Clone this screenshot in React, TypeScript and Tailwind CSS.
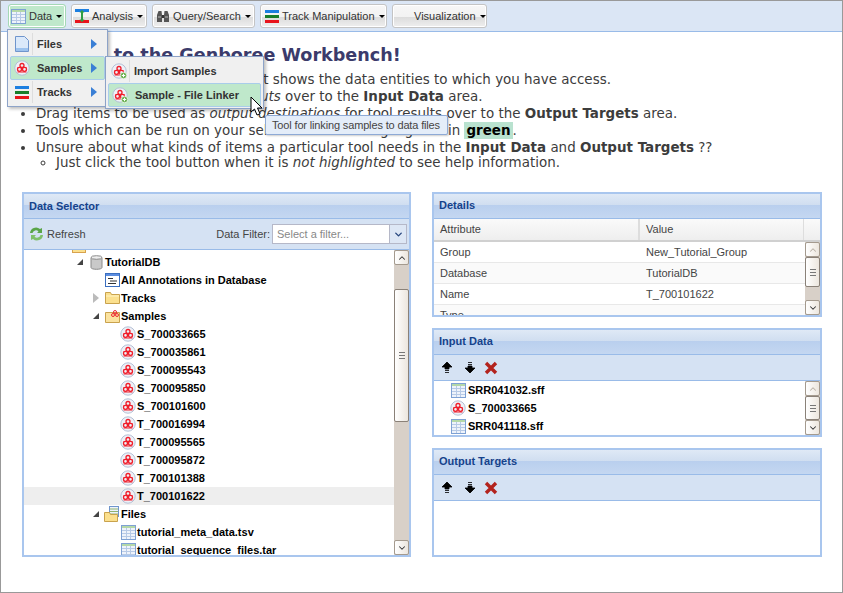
import { ChevronDown, ChevronUp } from "lucide-react";
import React from "react";

const treeRows: { label: string; level: number; arrow?: "open" | "closed"; icon: string }[] = [
  { label: "TutorialDB", level: 0, arrow: "open", icon: "db" },
  { label: "All Annotations in Database", level: 1, icon: "annot" },
  { label: "Tracks", level: 1, arrow: "closed", icon: "folder" },
  { label: "Samples", level: 1, arrow: "open", icon: "samplefolder" },
  { label: "S_700033665", level: 2, icon: "sample" },
  { label: "S_700035861", level: 2, icon: "sample" },
  { label: "S_700095543", level: 2, icon: "sample" },
  { label: "S_700095850", level: 2, icon: "sample" },
  { label: "S_700101600", level: 2, icon: "sample" },
  { label: "T_700016994", level: 2, icon: "sample" },
  { label: "T_700095565", level: 2, icon: "sample" },
  { label: "T_700095872", level: 2, icon: "sample" },
  { label: "T_700101388", level: 2, icon: "sample" },
  { label: "T_700101622", level: 2, icon: "sample" },
  { label: "Files", level: 1, arrow: "open", icon: "filefolder" },
  { label: "tutorial_meta_data.tsv", level: 2, icon: "table" },
  { label: "tutorial_sequence_files.tar", level: 2, icon: "table" },
];

function TableIcon() {
  return (
    <svg width="15" height="15" viewBox="0 0 15 15" className="shrink-0">
      <rect x="0.5" y="0.5" width="14" height="14" fill="#eef3fb" stroke="#7ea1d4" />
      <rect x="1" y="1" width="13" height="2" fill="#b4d8a8" />
      <path d="M1 5.500h13M1 8.500h13M1 11.500h13M5.500 3v11M9.500 3v11" stroke="#b7cae6" />
    </svg>
  );
}

function SampleIcon({ plus }: { plus?: boolean }) {
  return (
    <svg width="16" height="16" viewBox="0 0 16 16" className="shrink-0">
      <circle cx="8" cy="8" r="7.200" fill="#eef0f6" stroke="#b4c0d6" />
      <circle cx="8" cy="5.500" r="2" fill="none" stroke="#f01d2a" strokeWidth="1.300" />
      <circle cx="5.500" cy="9.300" r="2" fill="none" stroke="#f01d2a" strokeWidth="1.300" />
      <circle cx="10.500" cy="9.300" r="2" fill="none" stroke="#f01d2a" strokeWidth="1.300" />
      <path d="M3.500 12h9M3.500 7.500h9M8 7v2" stroke="#f01d2a" />
      {plus && (
        <>
          <circle cx="12.500" cy="12.500" r="3.300" fill="#6cb254" stroke="#fff" strokeWidth="0.700" />
          <path d="M10.800 12.500h3.400M12.500 10.800v3.400" stroke="#fff" />
        </>
      )}
    </svg>
  );
}

function FolderIcon() {
  return (
    <svg width="15" height="14" viewBox="0 0 15 14" className="shrink-0">
      <path d="M0.500 12.500V1.500h5l1 2h8v9z" fill="#fbe08e" stroke="#c9a24d" />
      <path d="M1 5h13" stroke="#fff3c4" />
    </svg>
  );
}

function TreeIcon({ name }: { name: string }) {
  if (name === "sample") return <SampleIcon />;
  if (name === "table") return <TableIcon />;
  if (name === "folder") return <FolderIcon />;
  if (name === "db")
    return (
      <svg width="13" height="15" viewBox="0 0 13 15" className="shrink-0">
        <path d="M1 2.500v10c0 2.400 11 2.400 11 0v-10z" fill="#c9c9c9" stroke="#8a8a8a" />
        <ellipse cx="6.500" cy="2.500" rx="5.500" ry="1.800" fill="#eeeeee" stroke="#8a8a8a" />
      </svg>
    );
  if (name === "annot")
    return (
      <svg width="15" height="14" viewBox="0 0 15 14" className="shrink-0">
        <rect x="0.500" y="0.500" width="14" height="13" fill="#fff" stroke="#3b6fc0" />
        <rect x="1" y="1" width="13" height="2" fill="#5b8de0" />
        <path d="M3 5.500h5M5 8h7M3 10.500h8" stroke="#333" />
      </svg>
    );
  if (name === "samplefolder")
    return (
      <svg width="15" height="15" viewBox="0 0 15 15" className="shrink-0">
        <path d="M0.500 13.500V3.500h14v10z" fill="#fbe3a0" stroke="#c9a24d" />
        <circle cx="10" cy="3" r="1.500" fill="none" stroke="#ee2a35" />
        <circle cx="8" cy="6" r="1.500" fill="none" stroke="#ee2a35" />
        <circle cx="12" cy="6" r="1.500" fill="none" stroke="#ee2a35" />
      </svg>
    );
  return (
    <svg width="16" height="16" viewBox="0 0 16 16" className="shrink-0">
      <rect x="5.500" y="0.500" width="9" height="10" fill="#eef3fb" stroke="#6f95cc" />
      <path d="M6 3h8M6 5.500h8M6 8h8" stroke="#8fb36f" />
      <path d="M0.500 15.500V6.500h5l1 2h7v7z" fill="#fbe08e" stroke="#c9a24d" />
    </svg>
  );
}

function TracksIcon() {
  return (
    <svg width="14" height="13" viewBox="0 0 14 13" className="shrink-0">
      <rect width="14" height="3" fill="#1d7fe0" />
      <rect y="5" width="14" height="3" fill="#1a7d2b" />
      <rect y="10" width="14" height="3" fill="#e8141c" />
    </svg>
  );
}

function Arrow({ up }: { up: boolean }) {
  return (
    <svg width="12" height="13" viewBox="0 0 12 13" className="shrink-0">
      {up ? (
        <path d="M6 1l5 5H8v2H4V6H1zM4 9.500h4M4 11.500h4" fill="#000" stroke="#000" strokeWidth="0.800" />
      ) : (
        <path d="M6 12L1 7h3V5h4v2h3zM4 3.500h4M4 1.500h4" fill="#000" stroke="#000" strokeWidth="0.800" />
      )}
    </svg>
  );
}

function RemoveIcon() {
  return (
    <svg width="14" height="14" viewBox="0 0 14 14" className="shrink-0 -ml-[3px]">
      <path d="M2 2l10 10M12 2L2 12" stroke="#b3231d" strokeWidth="3.400" />
    </svg>
  );
}

function PanelHeader({ title, className }: { title: string; className?: string }) {
  return (
    <div className={`h-[25px] shrink-0 border-b border-[#99bbe8] bg-[linear-gradient(#dfe9f6_0,#d0def0_45%,#b9cfee_46%,#c4d7f1_100%)] pl-[5px] text-[11px] leading-[14px] font-bold text-[#15428b] ${className ?? "pt-[4px]"}`}>
      {title}
    </div>
  );
}

function MoveToolbar() {
  return (
    <div className="h-[26px] shrink-0 flex items-center gap-[11px] pl-[7px] border-b border-[#99bbe8] bg-[#d5e2f3]">
      <Arrow up />
      <Arrow up={false} />
      <RemoveIcon />
    </div>
  );
}

function Scrollbar({ thumbTop, thumbHeight, disabledUp }: { thumbTop: number; thumbHeight: number; disabledUp?: boolean }) {
  return (
    <div className="w-[15px] shrink-0 flex flex-col bg-[#d8d0c8]">
      <div className="h-[15px] shrink-0 flex items-center justify-center border border-[#a49a8e] rounded-[2px] bg-[linear-gradient(90deg,#fff,#ece6de)]">
        <ChevronUp size={10} strokeWidth={2.500} className={disabledUp ? "text-[#b8b0a6]" : "text-[#333]"} />
      </div>
      <div className="flex-1 relative">
        <div
          className="absolute left-0 right-0 flex items-center justify-center border border-[#8a8178] rounded-[2px] bg-[linear-gradient(90deg,#fff,#ece6de)]"
          style={{ top: thumbTop, height: thumbHeight }}
        >
          <div className="w-[6px] h-[7px] border-y border-[#777] flex items-center">
            <div className="w-full h-px bg-[#777]" />
          </div>
        </div>
      </div>
      <div className="h-[15px] shrink-0 flex items-center justify-center border border-[#a49a8e] rounded-[2px] bg-[linear-gradient(90deg,#fff,#ece6de)]">
        <ChevronDown size={10} strokeWidth={2.500} className="text-[#333]" />
      </div>
    </div>
  );
}

function ToolButton({ icon, label, active, className }: { icon: React.ReactNode; label: string; active?: boolean; className?: string }) {
  return (
    <div
      className={`h-[24px] shrink-0 flex items-center gap-[3px] rounded-[3px] border pl-[2px] text-[11px] text-[#333] shadow-[inset_0_0_0_1px_#fff] ${
        active
          ? "border-[#a5d8b5] bg-[#bfe8cb]"
          : "border-[#c4c4c4] bg-[linear-gradient(#f7f7f7_0,#f2f2f2_55%,#dcdcdc_56%,#efefef_100%)]"
      } ${className ?? ""}`}
    >
      <span className="w-[15px] shrink-0 flex justify-center">{icon}</span>
      <span>{label}</span>
      <span className="ml-[1px] w-0 h-0 border-x-[3px] border-x-transparent border-t-[3px] border-t-black" />
    </div>
  );
}

function MenuArrow() {
  return <span className="ml-auto w-0 h-0 border-y-[5px] border-y-transparent border-l-[6px] border-l-[#3a7fd5]" />;
}

export default function App() {
  return (
    <div className="relative w-[843px] h-[593px] overflow-hidden border border-[#999] bg-white font-['Liberation_Sans',sans-serif]">
      {/* top toolbar */}
      <div className="h-[31px] flex items-center gap-[5px] pl-[7px] border-b border-[#99bbe8] bg-[#dbe6f5]">
        <ToolButton active icon={<TableIcon />} label="Data" className="w-[58px]" />
        <ToolButton
          className="w-[76px]"
          icon={
            <svg width="14" height="14" viewBox="0 0 14 14" className="shrink-0">
              <rect width="14" height="3" fill="#1d7fe0" />
              <rect y="11" width="14" height="3" fill="#e8141c" />
              <path d="M7 1l2.500 2.500H8v7h1.500L7 13l-2.500-2.500H6v-7H4.500z" fill="#2f9e44" />
            </svg>
          }
          label="Analysis"
        />
        <ToolButton
          className="w-[103px]"
          icon={
            <svg width="14" height="13" viewBox="0 0 14 13" className="shrink-0">
              <path d="M1 12V5l1.500-4h3L6 5v7zM8 12V5l.5-4h3L13 5v7z" fill="#555" />
              <path d="M6 5h2v3H6z" fill="#333" />
              <path d="M2 7h3M9 7h3" stroke="#bbb" />
            </svg>
          }
          label="Query/Search"
        />
        <ToolButton icon={<TracksIcon />} label="Track Manipulation" className="w-[127px] pl-[3px]" />
        <ToolButton icon={<span />} label="Visualization" className="w-[95px] pl-[3px]" />
      </div>

      {/* intro text */}
      <div className="h-[160px] font-['DejaVu_Sans',sans-serif] text-[13.450px] leading-[17px] text-[#3c3c3c]">
        <h1 className="pl-[17px] pt-[12px] text-[17.600px] leading-[22px] font-bold text-[#3b3b6b]">
          Welcome to the Genboree Workbench!
        </h1>
        <ul className="list-disc pl-[35px] mt-[5px]">
          <li>The Data Selector panel at the left shows the data entities to which you have access.</li>
          <li>
            Drag items to be used as tool <i>inputs</i> over to the <b>Input Data</b> area.
          </li>
          <li>
            Drag items to be used as <i>output destinations</i> for tool results over to the <b>Output Targets</b> area.
          </li>
          <li>
            Tools which can be run on your selections will be highlighted in{" "}
            <b className="bg-[#b9e2cf] px-[2px] py-[1px] text-black">green</b>.
          </li>
          <li>
            Unsure about what kinds of items a particular tool needs in the <b>Input Data</b> and{" "}
            <b>Output Targets</b> ??
            <ul className="list-[circle] pl-[20px] -mt-[1px] leading-[15px]">
              <li>
                Just click the tool button when it is <i>not highlighted</i> to see help information.
              </li>
            </ul>
          </li>
        </ul>
      </div>

      {/* panels */}
      <div className="flex gap-[21px] pl-[21px]">
        <div className="w-[389px] h-[365px] flex flex-col border-2 border-[#a9c6ee]">
          <PanelHeader title="Data Selector" className="pt-[5px]" />
          <div className="h-[31px] shrink-0 flex items-center pl-[4px] pr-[2px] text-[11px] text-[#444] border-b border-[#99bbe8] bg-[#d5e2f3]">
            <svg width="17" height="16" viewBox="0 0 17 16" className="shrink-0 mr-[2px]">
              <path d="M2 7a6 6 0 0 1 10-4l2-1v5h-5l1.500-1.500A3.500 3.500 0 0 0 4.500 7z" fill="#5aa548" />
              <path d="M15 9a6 6 0 0 1-10 4l-2 1V9h5l-1.500 1.500A3.500 3.500 0 0 0 12.500 9z" fill="#7fc06a" />
            </svg>
            <span>Refresh</span>
            <span className="ml-auto mr-[2px]">Data Filter:</span>
            <div className="w-[135px] h-[20px] flex items-center border border-[#b5b8c8] bg-white">
              <span className="flex-1 pl-[4px] text-[#888]">Select a filter...</span>
              <span className="w-[17px] h-full flex items-center justify-center border-l border-[#b5b8c8] bg-[#dde7f5]">
                <ChevronDown size={11} strokeWidth={3} className="text-[#26467e]" />
              </span>
            </div>
          </div>
          <div className="flex-1 min-h-0 flex">
            <div className="flex-1 min-w-0 overflow-hidden">
              {/* bottom edge of the parent folder, scrolled out of view */}
              <div className="h-[3px] w-[14px] ml-[48px] border-x border-b border-[#d8a24d] bg-[#fbe08e]" />
              {treeRows.map((row) => (
                <div
                  key={row.label}
                  className={`h-[18px] flex items-center text-[11px] font-bold text-black ${
                    row.label === "T_700101622" ? "bg-[#eeeeee]" : ""
                  }`}
                  style={{ paddingLeft: 48 + row.level * 16 }}
                >
                  <span className="w-[16px] shrink-0 flex justify-center">
                    {row.arrow === "open" && (
                      <span className="w-0 h-0 border-b-[6px] border-b-[#444] border-l-[6px] border-l-transparent" />
                    )}
                    {row.arrow === "closed" && (
                      <span className="w-0 h-0 border-y-[5px] border-y-transparent border-l-[6px] border-l-[#bbb]" />
                    )}
                  </span>
                  <span className="w-[16px] shrink-0 flex justify-center">
                    <TreeIcon name={row.icon} />
                  </span>
                  <span className="ml-[1px] whitespace-nowrap">{row.label}</span>
                </div>
              ))}
            </div>
            <Scrollbar thumbTop={24} thumbHeight={133} />
          </div>
        </div>

        <div className="w-[390px] flex flex-col gap-[11px]">
          <div className="h-[125px] flex flex-col border-2 border-[#a9c6ee]">
            <PanelHeader title="Details" />
            <div className="h-[23px] shrink-0 flex items-center text-[11px] text-[#444] border-b-2 border-[#d0d0d0] bg-[linear-gradient(#fafafa,#eeeeee)]">
              <div className="w-[206px] pl-[6px] h-full flex items-center border-r-2 border-[#dddddd]">Attribute</div>
              <div className="w-[164px] pl-[6px] h-full flex items-center border-r border-[#dddddd]">Value</div>
            </div>
            <div className="flex-1 min-h-0 flex">
              <div className="flex-1 min-w-0 overflow-hidden text-[11px] text-[#444]">
                {[
                  ["Group", "New_Tutorial_Group"],
                  ["Database", "TutorialDB"],
                  ["Name", "T_700101622"],
                  ["Type", ""],
                ].map(([attr, val], i) => (
                  <div key={attr} className={`h-[21px] shrink-0 flex items-center border-b border-[#e8e8e8] ${i % 2 ? "bg-[#fafafa]" : "bg-white"}`}>
                    <div className="w-[206px] pl-[6px]">{attr}</div>
                    <div className="pl-[6px]">{val}</div>
                  </div>
                ))}
              </div>
              <Scrollbar thumbTop={0} thumbHeight={30} disabledUp />
            </div>
          </div>

          <div className="h-[109px] flex flex-col border-2 border-[#a9c6ee]">
            <PanelHeader title="Input Data" />
            <MoveToolbar />
            <div className="flex-1 min-h-0 flex">
              <div className="flex-1 min-w-0 overflow-hidden pl-[16px] text-[11px] font-bold text-black">
                {[
                  { label: "SRR041032.sff", sample: false },
                  { label: "S_700033665", sample: true },
                  { label: "SRR041118.sff", sample: false },
                ].map((item) => (
                  <div key={item.label} className="h-[18px] flex items-center gap-[2px]">
                    <span className="w-[16px] flex justify-center">{item.sample ? <SampleIcon /> : <TableIcon />}</span>
                    <span>{item.label}</span>
                  </div>
                ))}
              </div>
              <Scrollbar thumbTop={0} thumbHeight={24} disabledUp />
            </div>
          </div>

          <div className="h-[109px] flex flex-col border-2 border-[#a9c6ee]">
            <PanelHeader title="Output Targets" />
            <MoveToolbar />
            <div className="flex-1 bg-white" />
          </div>
        </div>
      </div>

      {/* open menu */}
      <div className="absolute left-[6px] top-[28px] w-[101px] h-[78px] flex flex-col p-[2px] border border-[#8da3c8] bg-[#f0f0f0] shadow-[2px_2px_3px_rgba(0,0,0,0.25)] text-[11px] font-bold text-[#333]">
        {[
          { label: "Files", icon: (
            <svg width="14" height="16" viewBox="0 0 14 16" className="shrink-0">
              <path d="M0.500 0.500h9l4 4v11h-13z" fill="#dbe9fa" stroke="#6f95cc" />
              <path d="M1 12h12v3H1z" fill="#9cc2ee" />
            </svg>
          ) },
          { label: "Samples", icon: <SampleIcon />, active: true },
          { label: "Tracks", icon: <TracksIcon /> },
        ].map((m) => (
          <div key={m.label} className={`h-[24px] flex items-center pr-[7px] border rounded-[2px] ${m.active ? "bg-[#bfe8cb] border-[#a9cdea]" : "border-transparent"}`}>
            <span className={`w-[22px] h-full flex items-center justify-center mr-[4px] ${m.active ? "" : "border-r border-[#dddddd]"}`}>{m.icon}</span>
            <span>{m.label}</span>
            <MenuArrow />
          </div>
        ))}
      </div>
      <div className="absolute left-[104px] top-[55px] w-[159px] h-[53px] flex flex-col pt-[2px] pb-[1px] px-[2px] border border-[#8da3c8] bg-[#f0f0f0] shadow-[2px_2px_3px_rgba(0,0,0,0.25)] text-[11px] font-bold text-[#333]">
        <div className="h-[24px] flex items-center border border-transparent">
          <span className="w-[21px] h-full flex items-center justify-center border-r border-[#dddddd]">
            <SampleIcon plus />
          </span>
          <span className="ml-[4px]">Import Samples</span>
        </div>
        <div className="h-[24px] flex items-center border border-[#a9cdea] rounded-[2px] bg-[#bfe8cb]">
          <span className="w-[21px] flex justify-center">
            <SampleIcon plus />
          </span>
          <span className="ml-[5px]">Sample - File Linker</span>
        </div>
      </div>

      {/* tooltip */}
      <div className="absolute left-[264px] top-[114px] h-[20px] w-[183px] flex items-center pl-[6px] rounded-[2px] border border-[#8eaad6] bg-[#e4edf9] shadow-[1px_1px_2px_rgba(0,0,0,0.2)] text-[11px] tracking-[-0.150px] text-[#444] whitespace-nowrap">
        Tool for linking samples to data files
      </div>

      {/* mouse cursor */}
      <svg width="14" height="21" viewBox="0 0 14 21" className="absolute left-[249px] top-[95px]">
        <path d="M1 1v15l3.500-3 2.500 6 3-1.200-2.500-5.800H12z" fill="#fff" stroke="#000" />
      </svg>
    </div>
  );
}
